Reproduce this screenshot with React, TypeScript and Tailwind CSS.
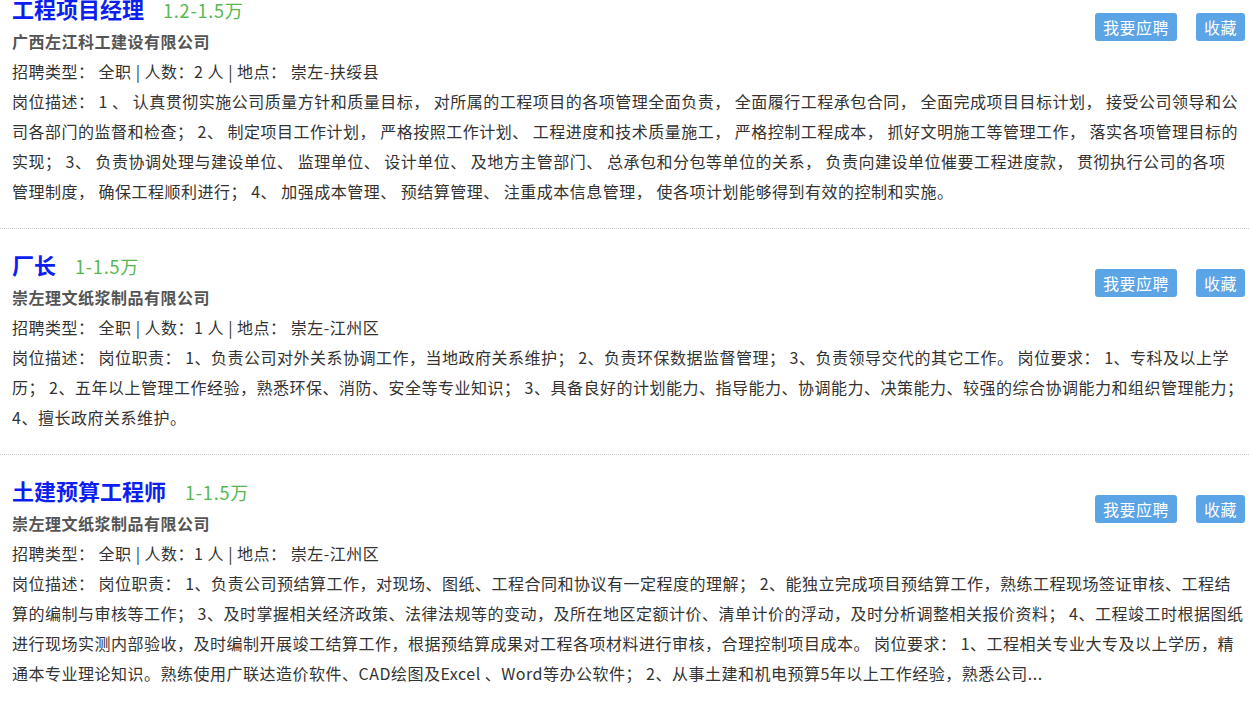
import React from 'react'

type Job = {
    title: string
    salary: string
    company: string
    count: string
    place: string
    desc: string[]
}

const jobs: Job[] = [
    {
        title: '工程项目经理',
        salary: '1.2-1.5万',
        company: '广西左江科工建设有限公司',
        count: '2',
        place: '崇左-扶绥县',
        desc: [
            '岗位描述： 1 、 认真贯彻实施公司质量方针和质量目标， 对所属的工程项目的各项管理全面负责， 全面履行工程承包合同， 全面完成项目目标计划， 接受公司领导和公',
            '司各部门的监督和检查； 2、 制定项目工作计划， 严格按照工作计划、 工程进度和技术质量施工， 严格控制工程成本， 抓好文明施工等管理工作， 落实各项管理目标的',
            '实现； 3、 负责协调处理与建设单位、 监理单位、 设计单位、 及地方主管部门、 总承包和分包等单位的关系， 负责向建设单位催要工程进度款， 贯彻执行公司的各项',
            '管理制度， 确保工程顺利进行； 4、 加强成本管理、 预结算管理、 注重成本信息管理， 使各项计划能够得到有效的控制和实施。',
        ],
    },
    {
        title: '厂长',
        salary: '1-1.5万',
        company: '崇左理文纸浆制品有限公司',
        count: '1',
        place: '崇左-江州区',
        desc: [
            '岗位描述： 岗位职责： 1、负责公司对外关系协调工作，当地政府关系维护； 2、负责环保数据监督管理； 3、负责领导交代的其它工作。 岗位要求： 1、专科及以上学',
            '历； 2、五年以上管理工作经验，熟悉环保、消防、安全等专业知识； 3、具备良好的计划能力、指导能力、协调能力、决策能力、较强的综合协调能力和组织管理能力；',
            '4、擅长政府关系维护。',
        ],
    },
    {
        title: '土建预算工程师',
        salary: '1-1.5万',
        company: '崇左理文纸浆制品有限公司',
        count: '1',
        place: '崇左-江州区',
        desc: [
            '岗位描述： 岗位职责： 1、负责公司预结算工作，对现场、图纸、工程合同和协议有一定程度的理解； 2、能独立完成项目预结算工作，熟练工程现场签证审核、工程结',
            '算的编制与审核等工作； 3、及时掌握相关经济政策、法律法规等的变动，及所在地区定额计价、清单计价的浮动，及时分析调整相关报价资料； 4、工程竣工时根据图纸',
            '进行现场实测内部验收，及时编制开展竣工结算工作，根据预结算成果对工程各项材料进行审核，合理控制项目成本。 岗位要求： 1、工程相关专业大专及以上学历，精',
            '通本专业理论知识。熟练使用广联达造价软件、CAD绘图及Excel 、Word等办公软件； 2、从事土建和机电预算5年以上工作经验，熟悉公司...',
        ],
    },
]

function JobItem({job}: {job: Job}) {
    return (
        <div className="pl-[12px] pr-[4px] pt-[19px] pb-[22px] border-b border-dotted border-[#c8c8c8]">
            {/* buttons float over the title/company rows */}
            <div className="float-right mt-[21px] flex gap-[19px]">
                <button className="h-[28px] px-[8px] rounded-[3px] bg-[#5ba4e6] text-white text-[16px] leading-[28px]">
                    我要应聘
                </button>
                <button className="h-[28px] px-[8px] rounded-[3px] bg-[#5ba4e6] text-white text-[16px] leading-[28px]">
                    收藏
                </button>
            </div>
            <div className="flex items-baseline leading-[32px]">
                <span className="text-[22px] font-bold tracking-normal text-[#0d1ef0]">{job.title}</span>
                <span className="ml-[19px] text-[18px] tracking-[0.8px] text-[#55b84f]">{job.salary}</span>
            </div>
            <div className="leading-[30px] font-bold text-[#555]">{job.company}</div>
            <div className="leading-[30px] text-[#333] whitespace-pre">
                招聘类型： 全职 | 人数：{job.count} 人 | 地点： {job.place}
            </div>
            <div className="leading-[30px] text-[#333]">
                {job.desc.map((line, i) => (
                    <div key={i} className="whitespace-nowrap">{line}</div>
                ))}
            </div>
        </div>
    )
}

export default function App() {
    return (
        <div className="min-h-screen bg-white overflow-hidden font-['Noto_Sans_CJK_SC',sans-serif] text-[16px] tracking-[0.5px]">
            <div className="-mt-[27px]">
                {jobs.map((job, i) => (
                    <JobItem key={i} job={job} />
                ))}
            </div>
        </div>
    )
}
